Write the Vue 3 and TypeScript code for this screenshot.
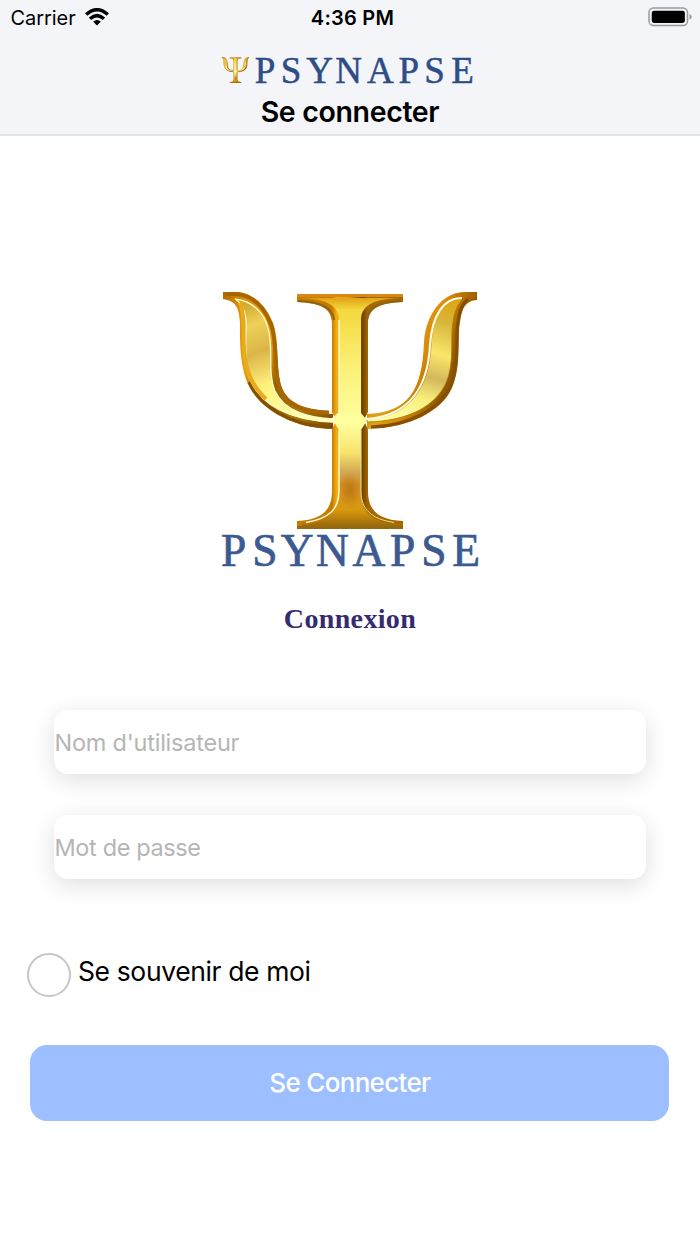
<script setup lang="ts">
import { ref } from 'vue'

const username = ref<string>('')
const password = ref<string>('')
const remember = ref<boolean>(false)
</script>

<template>
  <svg class="defs" width="0" height="0" aria-hidden="true">
    <defs>
      <linearGradient id="armL" x1="0" y1="0" x2="1" y2="1">
        <stop offset="0" stop-color="#a86400" />
        <stop offset=".12" stop-color="#dc9007" />
        <stop offset=".4" stop-color="#e9a00c" />
        <stop offset=".58" stop-color="#966000" />
        <stop offset=".78" stop-color="#a87609" />
        <stop offset="1" stop-color="#7d4a02" />
      </linearGradient>
      <linearGradient id="armR" x1="0" y1="0" x2="1" y2=".5">
        <stop offset="0" stop-color="#c98607" />
        <stop offset=".45" stop-color="#dda014" />
        <stop offset=".6" stop-color="#d98a08" />
        <stop offset=".85" stop-color="#8f5500" />
        <stop offset="1" stop-color="#a96f08" />
      </linearGradient>
      <linearGradient id="faceL" gradientUnits="userSpaceOnUse" x1="245" y1="300" x2="290" y2="420">
        <stop offset="0" stop-color="#c9a227" />
        <stop offset=".2" stop-color="#efd058" />
        <stop offset=".42" stop-color="#dcb548" />
        <stop offset=".68" stop-color="#fff27c" />
        <stop offset="1" stop-color="#ffffa8" />
      </linearGradient>
      <linearGradient id="faceR" gradientUnits="userSpaceOnUse" x1="455" y1="300" x2="420" y2="420">
        <stop offset="0" stop-color="#dfa40f" />
        <stop offset=".2" stop-color="#d8b63c" />
        <stop offset=".45" stop-color="#fae76a" />
        <stop offset=".65" stop-color="#d4b85a" />
        <stop offset=".82" stop-color="#f6ee78" />
        <stop offset="1" stop-color="#fffda0" />
      </linearGradient>
      <linearGradient id="stemEdge" gradientUnits="userSpaceOnUse" x1="332" y1="0" x2="368" y2="0">
        <stop offset="0" stop-color="#c57a05" />
        <stop offset=".13" stop-color="#f5ae10" />
        <stop offset=".5" stop-color="#d99a14" />
        <stop offset=".84" stop-color="#6b4303" />
        <stop offset="1" stop-color="#a86806" />
      </linearGradient>
      <linearGradient id="stemFace" gradientUnits="userSpaceOnUse" x1="0" y1="296" x2="0" y2="526">
        <stop offset="0" stop-color="#e09a10" />
        <stop offset=".06" stop-color="#f4d83e" />
        <stop offset=".3" stop-color="#fbf074" />
        <stop offset=".55" stop-color="#ffffa0" />
        <stop offset=".68" stop-color="#f8e46d" />
        <stop offset=".77" stop-color="#d0a653" />
        <stop offset=".82" stop-color="#d39024" />
        <stop offset=".93" stop-color="#d89910" />
        <stop offset="1" stop-color="#9b6a0a" />
      </linearGradient>
      <radialGradient id="glow">
        <stop offset="0" stop-color="#b06a0c" stop-opacity=".65" />
        <stop offset="1" stop-color="#b06a0c" stop-opacity="0" />
      </radialGradient>
      <filter id="soft" x="-5%" y="-5%" width="110%" height="110%">
        <feGaussianBlur stdDeviation=".75" />
      </filter>
      <symbol id="psi" viewBox="221 290 258 241">
        <g filter="url(#soft)">
          <path fill="url(#armL)" d="M223 292H237C255 293 267 308 273 323C280 342 275 369 282 388C290 407 310 413 333 414V429C290 428 257 407 247 382C239 362 240 335 240 323C239 306 235 301 223 299Z" />
          <path fill="url(#armR)" d="M477 292H463C443 293 426 313 424 342C422 392 408 412 367 414V429C412 428 441 410 451 390C462 368 457 337 460 322C462 307 466 301 477 300Z" />
          <path fill="none" stroke="#a96606" stroke-width="4" d="M226 294H237C254 296 265 309 271 324C278 342 273 370 280 389C288 407 308 412 329 412.500" />
          <path fill="none" stroke="#855104" stroke-width="3.200" d="M329 427C290 426 260 406 249 382M371 427C411 426 439 408 449 389C460 368 455 337 458 322C460 308 463 303 468 299" />
          <path fill="url(#faceL)" stroke="#fffbd0" stroke-width="1.300" d="M235 299C252 301 264 312 268 328C274 349 267 372 275 391C284 411 309 418 333 419V422C292 421 260 406 249 377C243 357 247 332 246 319C244 308 241 302 235 299Z" />
          <path fill="none" stroke="#e8ab1b" stroke-width="4" d="M240 303C246 315 241 344 246 364C249 378 256 390 266 399" />
          <path fill="url(#faceR)" stroke="#a77609" stroke-width=".8" d="M463 299C443 298 432 317 431 346C429 386 411 417 367 419V422C410 421 436 405 446 383C455 363 450 337 453 322C455 309 459 303 463 299Z" />
          <path fill="none" stroke="#fffbe0" stroke-width="2.200" d="M462 298C443 298 432 316 430 345C428 386 410 416 366 419" />
          <path fill="url(#stemEdge)" d="M297 294H403V302C382 303 368 307 368 324V412L364 420L368 430V491C368 511 379 520 403 521V529H297V521C321 520 332 511 332 491V430L336 420L332 412V324C332 307 318 303 297 302Z" />
          <path fill="#dc8612" d="M297 294H403V297H297Z" />
          <path fill="#956909" d="M297 526H403V529H297Z" />
          <path fill="none" stroke="#8f6310" stroke-width="2" d="M298 301C317 302 332 305 334 320M402 301C379 302 367 307 367 320" />
          <path fill="url(#stemFace)" d="M302 298H398C379 299 361 303 361 320V413L366 419V422L361 430V491C361 513 373 523 398 524V526H302V524C327 523 339 513 339 491V430L334 422V419L339 413V320C339 303 321 299 302 298Z" />
          <ellipse cx="350" cy="490" rx="11" ry="18" fill="url(#glow)" />
          <path fill="none" stroke="#ffface" stroke-width="1.500" d="M339 320V413L332 419M339 430V491C339 510 328 519 306 522.500" />
          <path fill="none" stroke="#eee184" stroke-width="1" d="M361 430V491C361 510 372 519 394 522.500" />
        </g>
      </symbol>
    </defs>
  </svg>

  <main class="screen">
    <header class="top">
      <div class="status">
        <div class="carrier">
          <span>Carrier</span>
          <svg class="wifi" width="24" height="18" viewBox="0 0 24 18">
            <g fill="none" stroke="#000" stroke-width="3.400">
              <path d="M1.200 6.600Q12-3.200 22.800 6.600" />
              <path d="M5 10.800Q12 4.500 19 10.800" />
            </g>
            <path d="M8.100 13.600Q12 10.200 15.900 13.600L12 17.400Z" />
          </svg>
        </div>
        <span class="time">4:36 PM</span>
        <svg class="battery" width="44" height="20" viewBox="0 0 44 20">
          <rect x="1" y="1" width="38.500" height="17.600" rx="4.600" fill="none" stroke="#98999c" stroke-width="1.500" />
          <rect x="3.700" y="3.700" width="33.200" height="12.300" rx="2.400" />
          <path d="M41.500 6.700Q46 9.800 41.500 13Z" fill="#98999c" />
        </svg>
      </div>
      <svg class="wordmark" width="260" height="46" viewBox="218 47 260 46">
        <use href="#psi" x="221.500" y="57" width="28" height="26.200" />
        <text class="brand small" y="82.500" x="254.800 280.700 306.200 335.200 367 398.600 424.200 451.300">PSYNAPSE</text>
      </svg>
      <h1>Se connecter</h1>
    </header>

    <section class="hero">
      <svg width="270" height="292" viewBox="215 290 270 292">
        <use href="#psi" x="221" y="290" width="258" height="241" />
        <text class="brand large" y="566" x="221 252.200 280.700 316 352.500 390 421.200 452.300">PSYNAPSE</text>
      </svg>
      <h2>Connexion</h2>
    </section>

    <form @submit.prevent>
      <div class="fields">
        <input v-model="username" class="name" type="text" placeholder="Nom d'utilisateur" />
        <input v-model="password" type="password" placeholder="Mot de passe" />
      </div>
      <label class="remember">
        <input v-model="remember" type="checkbox" />
        <span>Se souvenir de moi</span>
      </label>
      <button type="submit">Se Connecter</button>
    </form>
  </main>
</template>

<style>
body {
  margin: 0;
  background: #fff;
}
</style>

<style scoped>
.defs {
  display: block;
  position: absolute;
}
.screen {
  width: 700px;
  height: 1244px;
  overflow: hidden;
  background: #fff;
  color: #000;
  font-family: Inter, "Liberation Sans", sans-serif;
}
.top {
  box-sizing: border-box;
  height: 136px;
  background: #f3f5f9;
  border-bottom: 2px solid #e3e4e7;
  display: flex;
  flex-direction: column;
  align-items: center;
}
.status {
  box-sizing: border-box;
  width: 100%;
  height: 36px;
  padding: 0 8.500px 0 10.500px;
  display: grid;
  grid-template-columns: 1fr auto 1fr;
  align-items: center;
}
.carrier {
  display: flex;
  align-items: center;
  gap: 9px;
  font-size: 20px;
  letter-spacing: -0.05px;
}
.wifi {
  margin-top: -2px;
}
.time {
  font-size: 20px;
  font-weight: 600;
  letter-spacing: 0.25px;
  margin-left: 3px;
}
.battery {
  justify-self: end;
  margin-top: -2px;
}
.wordmark {
  display: block;
  flex: none;
  margin: 11px 0 0 -4px;
}
.brand {
  font-family: "Liberation Serif", serif;
  fill: #2d4d87;
  stroke: #2d4d87;
}
.small {
  font-size: 37px;
  stroke-width: 0.5px;
}
.large {
  font-size: 45.500px;
  fill: #3c5a92;
  stroke: #3c5a92;
  stroke-width: 0.7px;
}
h1 {
  margin: 1px 0 0;
  font-size: 28.500px;
  line-height: 36px;
  font-weight: 600;
  letter-spacing: -0.35px;
}
.hero {
  padding-top: 154px;
  display: flex;
  flex-direction: column;
  align-items: center;
}
.hero svg {
  display: block;
}
h2 {
  margin: 20px 0 0;
  font: bold 28px/34px "Liberation Serif", serif;
  color: #352c70;
  letter-spacing: 0.35px;
}
form {
  margin-top: 74px;
}
.fields {
  margin: 0 54px;
  display: flex;
  flex-direction: column;
  gap: 41px;
}
.fields input {
  box-sizing: border-box;
  width: 100%;
  height: 64px;
  padding: 0 0.500px;
  border: 0;
  border-radius: 14px;
  outline: 0;
  background: #fff;
  box-shadow: 0 6px 24px rgba(0, 0, 0, 0.13);
  font: 400 23.500px Inter, "Liberation Sans", sans-serif;
  letter-spacing: -0.37px;
}
.fields .name {
  letter-spacing: -0.23px;
}
.fields input::placeholder {
  color: #b5b5b5;
  opacity: 1;
}
.remember {
  margin: 74px 0 0 27px;
  display: flex;
  align-items: flex-start;
  gap: 7px;
  font-size: 26.500px;
  line-height: 36px;
  letter-spacing: -0.38px;
}
.remember input {
  appearance: none;
  box-sizing: border-box;
  width: 44px;
  height: 44px;
  margin: 0.400px 0 0;
  border: 2px solid #c6c6c6;
  border-radius: 50%;
}
.remember input:checked {
  background: #9dbfff;
}
button {
  display: block;
  width: 639px;
  height: 76px;
  margin: 47.600px 0 0 30.400px;
  padding: 0;
  border: 0;
  border-radius: 17px;
  background: #9dbfff;
  color: #fff;
  font: 500 26px Inter, "Liberation Sans", sans-serif;
  letter-spacing: -0.68px;
}
</style>
